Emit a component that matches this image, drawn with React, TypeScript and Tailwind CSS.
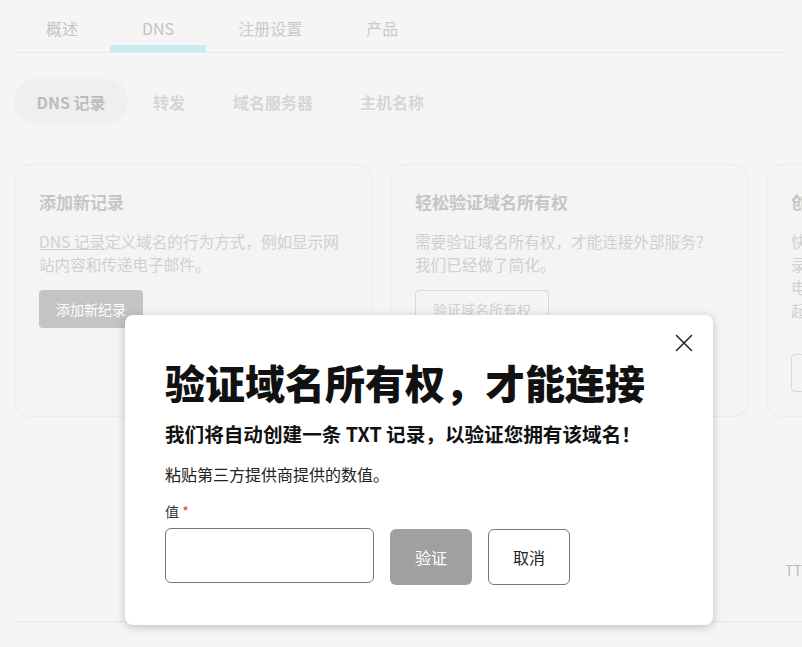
import React from "react";

const font = { fontFamily: '"Noto Sans CJK SC", "Noto Sans", sans-serif' };

function Card({ title, children, button, outline, btnMt = "mt-[14px]" }: { title: string; children: React.ReactNode; button: string; outline?: boolean; btnMt?: string }) {
  return (
    <div className="w-[359px] h-[253px] shrink-0 rounded-2xl border border-[#ebebeb] bg-[#f4f4f4] px-[24px] pt-[25px]">
      <div className="text-[17px] font-bold leading-[24px] text-[#c6c6c6]">{title}</div>
      <div className="mt-[16px] text-[15.6px] leading-[23px] text-[#d0d0d0]">{children}</div>
      {outline ? (
        <div className={`${btnMt} inline-flex h-[38px] items-center rounded-[4px] border border-[#d9d9d9] px-[17px] text-[14px] text-[#d0d0d0]`}>{button}</div>
      ) : (
        <div className={`${btnMt} inline-flex h-[38px] items-center rounded-[4px] bg-[#c4c4c4] px-[17px] text-[14px] text-white`}>{button}</div>
      )}
    </div>
  );
}

export default function App() {
  return (
    <div style={font} className="relative h-[647px] w-[802px] overflow-hidden bg-[#f5f5f5]">
      {/* top tabs */}
      <div className="mx-[14px] flex h-[53px] border-b border-[#e9e9e9]">
        <div className="flex h-[52px] items-center border-b-[7px] border-transparent px-8 pt-[10px] text-[16px] text-[#c4c4c4]">概述</div>
        <div className="flex h-[52px] items-center border-b-[7px] border-[#c6ecee] px-8 pt-[10px] text-[16px] text-[#c4c4c4]">DNS</div>
        <div className="flex h-[52px] items-center border-b-[7px] border-transparent px-8 pt-[10px] text-[16px] text-[#cacaca]">注册设置</div>
        <div className="flex h-[52px] items-center border-b-[7px] border-transparent px-8 pt-[10px] text-[16px] text-[#cacaca]">产品</div>
      </div>

      {/* sub tabs */}
      <div className="mx-[14px] mt-[26px] flex">
        <div className="flex h-[45px] w-[114px] items-center justify-center rounded-full bg-[#efefef] text-[16px] font-semibold text-[#bdbdbd]">DNS 记录</div>
        <div className="flex h-[45px] items-center px-[25px] text-[16px] font-semibold text-[#d6d6d6]">转发</div>
        <div className="flex h-[45px] items-center px-[23px] text-[16px] font-semibold text-[#d6d6d6]">域名服务器</div>
        <div className="flex h-[45px] items-center px-[24px] text-[16px] font-semibold text-[#d6d6d6]">主机名称</div>
      </div>

      {/* cards */}
      <div className="ml-[14px] mt-[40px] flex gap-[17px]">
        <Card title="添加新记录" button="添加新纪录">
          <span className="underline">DNS 记录</span>定义域名的行为方式，例如显示网站内容和传递电子邮件。
        </Card>
        <Card title="轻松验证域名所有权" button="验证域名所有权" outline>
          需要验证域名所有权，才能连接外部服务？我们已经做了简化。
        </Card>
        <Card title="创建电子邮件" button="创建电子邮件" outline btnMt="mt-[32px]">
          快速设置电子邮件服务所需的 DNS 记<br />录，以便您可以使用自定义域名收发<br />电子邮件。只需几分钟即可完成设置<br />起来。
        </Card>
      </div>

      {/* table header */}
      <div className="ml-[14px] mt-[140px] h-[65px] border-b border-[#e6e6e6] pl-[771px] text-[14px] leading-[26px] text-[#b9b9b9]">
        TTL
      </div>

      {/* modal */}
      <div className="absolute left-[125px] top-[315px] w-[588px] rounded-[8px] bg-white px-10 pb-10 pt-[43px] shadow-[0_2px_10px_rgba(0,0,0,0.22)]">
        <button className="absolute right-[20px] top-[19px] flex h-[18px] w-[18px] items-center justify-center text-[#222]">
          <svg width="18" height="18" viewBox="0 0 18 18" fill="none" stroke="currentColor" strokeWidth="1.5" strokeLinecap="round">
            <path d="M1.5 1.5 L16.5 16.5 M16.5 1.5 L1.5 16.5" />
          </svg>
        </button>
        <div className="text-[40px] font-black leading-[48px] text-[#111]">验证域名所有权，才能连接</div>
        <div className="mt-[14px] text-[19.6px] font-bold leading-[28px] text-[#111]">我们将自动创建一条 TXT 记录，以验证您拥有该域名！</div>
        <div className="mt-[14px] text-[16px] leading-[24px] text-[#222]">粘贴第三方提供商提供的数值。</div>
        <div className="mt-[15px] text-[14px] leading-[20px] text-[#333]">
          值 <span className="text-[#d0453a]">*</span>
        </div>
        <div className="mt-[7px] flex items-start gap-[16px]">
          <div className="h-[55px] w-[209px] rounded-[6px] border border-[#777]" />
          <div className="mt-[1px] flex h-[56px] w-[82px] items-center justify-center rounded-[6px] bg-[#a0a0a0] text-[16px] text-white">验证</div>
          <div className="mt-[1px] flex h-[56px] w-[82px] items-center justify-center rounded-[6px] border border-[#777] bg-white text-[16px] text-[#222]">取消</div>
        </div>
      </div>
    </div>
  );
}
